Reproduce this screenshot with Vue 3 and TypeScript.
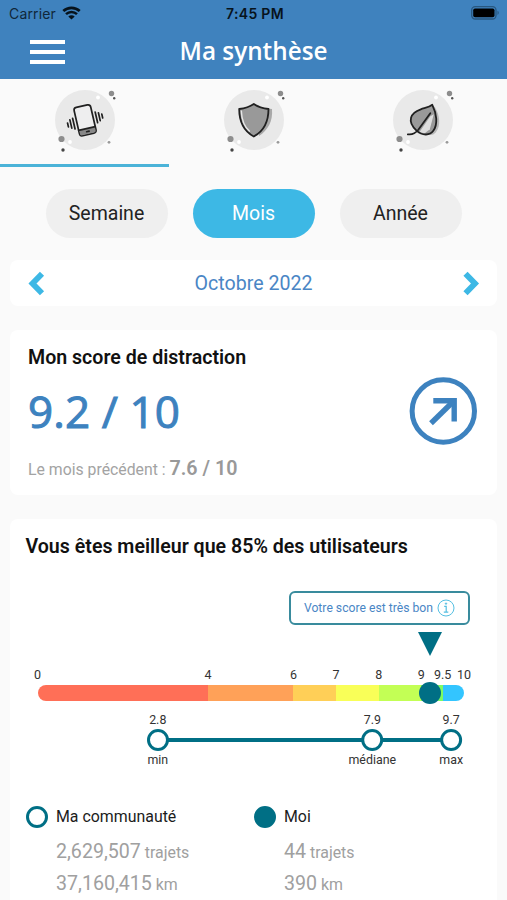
<script setup lang="ts">
interface Segment { from: number; to: number; color: string }
interface Marker { value: number; at: number; label: string }
interface Legend { name: string; filled: boolean; trips: string; km: string }

const periods: string[] = ['Semaine', 'Mois', 'Année']
const activePeriod = 'Mois'
const score = 9.2

const segments: Segment[] = [
  { from: 0, to: 4, color: '#ff6f57' },
  { from: 4, to: 6, color: '#ffa158' },
  { from: 6, to: 7, color: '#ffcf57' },
  { from: 7, to: 8, color: '#f9ff58' },
  { from: 8, to: 9, color: '#c3ff55' },
  { from: 9, to: 9.5, color: '#7dfb62' },
  { from: 9.5, to: 10, color: '#33c5ff' },
]
const ticks: number[] = [0, 4, 6, 7, 8, 9, 9.5, 10]
const markers: Marker[] = [
  { value: 2.8, at: 2.82, label: 'min' },
  { value: 7.9, at: 7.85, label: 'médiane' },
  { value: 9.7, at: 9.7, label: 'max' },
]
const legends: Legend[] = [
  { name: 'Ma communauté', filled: false, trips: '2,629,507', km: '37,160,415' },
  { name: 'Moi', filled: true, trips: '44', km: '390' },
]
const pct = (v: number): string => `${v * 10}%`
</script>

<template>
  <div class="screen">
    <header class="header">
      <div class="status">
        <div class="carrier">
          <span>Carrier</span>
          <svg width="19" height="14" viewBox="0 0 19 14" fill="none" stroke="#07131c">
            <path d="M1.3 5.1C5.9.7 13.1.7 17.7 5.1" stroke-width="2.7" />
            <path d="M4 8.1c3.1-2.9 7.900-2.900 11 0" stroke-width="2.500" />
            <path d="M9.500 13.500 6.300 10.400c1.800-1.600 4.600-1.600 6.400 0z" fill="#07131c" stroke="none" />
          </svg>
        </div>
        <span class="time">7:45 PM</span>
        <svg class="battery" width="31" height="14" viewBox="0 0 31 14">
          <rect x="1.700" y=".7" width="24.300" height="12.300" rx="3.500" fill="none" stroke="#28577f" stroke-width="1.300" />
          <rect x="3.200" y="2.500" width="21.300" height="8.700" rx="1.800" fill="#000" />
          <path d="M27.500 4.800c1.700.8 1.700 3.300 0 4.100z" fill="#28577f" />
        </svg>
      </div>
      <div class="titlebar">
        <div class="burger"><i></i><i></i><i></i></div>
        <h1>Ma synthèse</h1>
      </div>
    </header>

    <nav class="tabs">
      <div v-for="n in 3" :key="n" class="tab" :class="{ active: n === 1 }">
        <svg width="64" height="64" viewBox="0 0 64 64" fill="none">
          <circle cx="32" cy="31" r="30" fill="#e9e9e9" />
          <circle cx="58.500" cy="4.500" r="2.700" fill="#8d8d8d" />
          <circle cx="61.200" cy="9.300" r="1.200" fill="#555" />
          <circle cx="8.500" cy="50" r="3.100" fill="#8d8d8d" />
          <circle cx="10" cy="61" r="1.700" fill="#444" />
          <circle cx="56" cy="53.300" r="1.400" fill="#999" />
          <circle cx="45" cy="8.500" r="1.900" fill="#fff" />
          <circle cx="17" cy="53" r="1.900" fill="#fff" />
          <g v-if="n === 1" stroke="#202020" stroke-width="1.700" stroke-linecap="round">
            <g transform="rotate(-13 32 31)">
              <rect x="23.500" y="16.800" width="17" height="29" rx="2.800" fill="#eeeeef" />
              <path d="M24 40h16v3.500q0 1.800-2 1.800H26q-2 0-2-1.800z" fill="#888" stroke="none" />
              <path d="M23.500 39.700h17M31 42.800h2.500" />
              <path d="M20.300 26.500v11M17.300 27.500v8.500M14.300 30v4M43.700 25.500v11M46.700 27v8M49.700 29v4" />
            </g>
          </g>
          <g v-else-if="n === 2" stroke-linejoin="round">
            <path d="M35 15.500q6 4 15 4.500c1 12.500-4 21-13 27z" fill="#a8a8a8" />
            <path d="M31.800 15Q26 19 17.200 20c0 13 4.500 22 14.600 27.500C42 42 46.500 33 46.500 20Q37.500 19 31.800 15z" fill="#999" stroke="#202020" stroke-width="1.800" />
            <path d="M19.300 21.500c.3 9 3 16.500 8.500 21" stroke="#e8e8e8" stroke-width="1.400" />
          </g>
          <g v-else stroke-linecap="round" stroke-linejoin="round" transform="translate(-.7 .3)">
            <path d="M44 17c6 9 6.500 20 1.500 26-3 3.500-6 3-8 2z" fill="#b8b8b8" />
            <path d="M42 15.500c-3 2.500-7 3-11.500 4.500C20 23.500 16.500 32 26 41c6 5.500 13.500 5.500 17 .5 4.700-6.500 3.500-17-1-26z" fill="#999" />
            <path d="M29 43 40 27l3.500-2-4 15-5 4z" fill="#ddd" />
            <path d="M42 15.500c-3 2.500-7 3-11.500 4.500C20 23.500 16.500 32 26 41c6 5.500 13.500 5.500 17 .5 4.700-6.500 3.500-17-1-26zM40 24 28 40.500Q23.500 46 17.500 45" stroke="#202020" stroke-width="1.800" />
          </g>
        </svg>
      </div>
    </nav>

    <main class="content">
      <div class="periods">
        <button v-for="p in periods" :key="p" type="button" :class="{ on: p === activePeriod }">{{ p }}</button>
      </div>

      <section class="card month">
        <svg width="18" height="25" viewBox="0 0 18 25" fill="none" stroke="#3db8e5" stroke-width="5.800"><path d="M15 2.700 5.500 12.500l9.500 9.800" /></svg>
        <span>Octobre 2022</span>
        <svg width="18" height="25" viewBox="0 0 18 25" fill="none" stroke="#3db8e5" stroke-width="5.800"><path d="m3.500 2.700 9.500 9.800-9.500 9.800" /></svg>
      </section>

      <section class="card score">
        <div>
          <h2>Mon score de distraction</h2>
          <p class="big">9.2 / 10</p>
          <p class="prev">Le mois précédent : <b>7.6 / 10</b></p>
        </div>
        <svg width="68" height="68" viewBox="0 0 68 68" fill="none" stroke="#3d82bf">
          <circle cx="34.300" cy="34" r="31.200" stroke-width="5" />
          <path d="M24.300 23.700H45.200V44.500" stroke-width="5.400" />
          <path d="M22 46.300 44 24.700" stroke-width="5.400" />
        </svg>
      </section>

      <section class="card compare">
        <h2>Vous êtes meilleur que 85% des utilisateurs</h2>
        <div class="verdict">
          <span>Votre score est très bon</span>
          <svg width="18" height="18" viewBox="0 0 18 18" fill="none" stroke="#55bfe2">
            <circle cx="9" cy="9" r="8" />
            <path d="M7.200 7.300h2v5.800M6.800 13.200h4.500" stroke-width="1.200" />
            <circle cx="9" cy="4.600" r=".7" fill="#55bfe2" />
          </svg>
        </div>

        <div class="chart">
          <svg class="pointer" :style="{ left: pct(score) }" width="24" height="24" viewBox="0 0 24 24"><path d="M0 0h24L12 24z" fill="#006f85" /></svg>
          <div class="ticks">
            <span v-for="t in ticks" :key="t" :style="{ left: pct(t) }">{{ t }}</span>
          </div>
          <div class="track">
            <div class="bar">
              <i v-for="s in segments" :key="s.from" :style="{ flexGrow: s.to - s.from, background: s.color }"></i>
            </div>
            <b class="me" :style="{ left: pct(score) }"></b>
          </div>
          <div class="range">
            <div class="line" :style="{ left: pct(markers[0].at), right: pct(10 - markers[2].at) }"></div>
            <div v-for="m in markers" :key="m.label" class="marker" :style="{ left: pct(m.at) }">
              <span>{{ m.value }}</span>
              <i></i>
              <span>{{ m.label }}</span>
            </div>
          </div>
        </div>

        <div class="legends">
          <div v-for="l in legends" :key="l.name" class="legend">
            <i :class="{ filled: l.filled }"></i>
            <div>
              <p class="name">{{ l.name }}</p>
              <p class="stat"><span>{{ l.trips }}</span> trajets</p>
              <p class="stat"><span>{{ l.km }}</span> km</p>
            </div>
          </div>
        </div>
      </section>
    </main>
  </div>
</template>

<style>
body { background: #fafafa; overflow: hidden; }
</style>

<style scoped>
* { box-sizing: border-box; }
h1, h2, p { margin: 0; }
.screen { height: 900px; overflow: hidden; background: #fafafa; font-family: Roboto, "Liberation Sans", sans-serif; color: #1c1c1c; }

.header { height: 79px; background: #3f82be; }
.status { display: grid; grid-template-columns: 1fr auto 1fr; align-items: center; height: 27px; padding: 0 6px 0 9px; font: 14px/27px Inter, sans-serif; color: #10273a; }
.carrier { display: flex; align-items: center; gap: 6px; letter-spacing: .15px; }
.carrier svg { margin-top: -2px; }
.time { font-weight: 600; color: #07131c; letter-spacing: .3px; }
.battery { justify-self: end; margin-top: -1px; }
.titlebar { display: grid; grid-template-columns: 1fr auto 1fr; align-items: center; height: 50px; padding: 0 30px; }
.burger { display: flex; flex-direction: column; gap: 6px; width: 35px; }
.burger i { height: 4px; background: #fff; }
h1 { margin-top: -2px; font: 600 24.3px/50px "Open Sans", "Noto Sans", sans-serif; color: #fff; }

.tabs { display: grid; grid-template-columns: repeat(3, 1fr); height: 88px; }
.tab { display: flex; justify-content: center; padding-top: 10px; border-bottom: 3px solid transparent; }
.tab.active { border-color: #4bb3d8; }

.content { display: flex; flex-direction: column; padding: 22px 10px 0; }
.periods { display: flex; justify-content: center; gap: 25px; }
.periods button { width: 122px; height: 49px; padding: 1px 0 0; border: 0; border-radius: 25px; background: #efefef; color: #222; font: 19.5px/48px Roboto, sans-serif; }
.periods .on { background: #3db8e5; color: #fff; }

.card { background: #fff; border-radius: 8px; }
.month { display: flex; align-items: center; justify-content: space-between; height: 46px; margin-top: 22px; padding: 0 17px; font-size: 19.6px; color: #4a86c5; }

.score { display: flex; justify-content: space-between; height: 165px; margin-top: 24px; padding: 15px 20px 0 18px; }
.score > svg { margin-top: 32px; }
h2 { font-size: 19.6px; line-height: 26px; font-weight: 600; color: #111; white-space: nowrap; }
.big { margin-top: 10px; font: 500 44px/60px "Open Sans", "Noto Sans", sans-serif; color: #3d82bf; -webkit-text-stroke: 1px #3d82bf; letter-spacing: .1px; }
.prev { margin-top: 15px; font-size: 15.8px; line-height: 26px; color: #a3a3a3; }
.prev b { font-size: 19.7px; font-weight: 600; color: #999; }

.compare { height: 400px; margin-top: 24px; padding: 15px 27px 0 15.5px; }
.verdict { display: flex; align-items: center; justify-content: center; gap: 4px; width: 181px; height: 34px; margin: 31px 0 0 auto; border: 2px solid #398b9d; border-radius: 6px; font-size: 12.2px; color: #4a86c5; }

.chart { position: relative; width: 426.5px; margin: 0 0 0 12px; padding-top: 41px; }
.pointer { position: absolute; top: 7px; transform: translateX(-50%); }
.ticks { position: relative; height: 19px; font-size: 12.5px; line-height: 18px; color: #333; }
.ticks span { position: absolute; transform: translateX(-50%); }
.track { position: relative; }
.bar { display: flex; height: 16px; border-radius: 8px; overflow: hidden; }
.bar i { flex-basis: 0; }
.me { position: absolute; top: -3px; width: 22px; height: 22px; border-radius: 50%; background: #006f85; transform: translateX(-50%); }
.range { position: relative; height: 68px; font-size: 12.4px; color: #333; }
.line { position: absolute; top: 37px; height: 4px; background: #006f85; }
.marker { position: absolute; top: 10px; display: flex; flex-direction: column; align-items: center; transform: translateX(-50%); line-height: 18px; }
.marker i { width: 22px; height: 22px; border: 3px solid #006f85; border-radius: 50%; background: #fff; }

.legends { display: grid; grid-template-columns: 228px 1fr; margin-top: 37px; }
.legend { display: flex; gap: 8.5px; }
.legend > i { width: 22px; height: 22px; border: 3px solid #006f85; border-radius: 50%; }
.legend > i.filled { background: #006f85; }
.name { font-size: 15.9px; line-height: 22px; margin-bottom: 8px; }
.stat { font-size: 15.9px; line-height: 32px; height: 32px; color: #a0a0a0; white-space: nowrap; }
.stat span { font-size: 19.600px; }
</style>
